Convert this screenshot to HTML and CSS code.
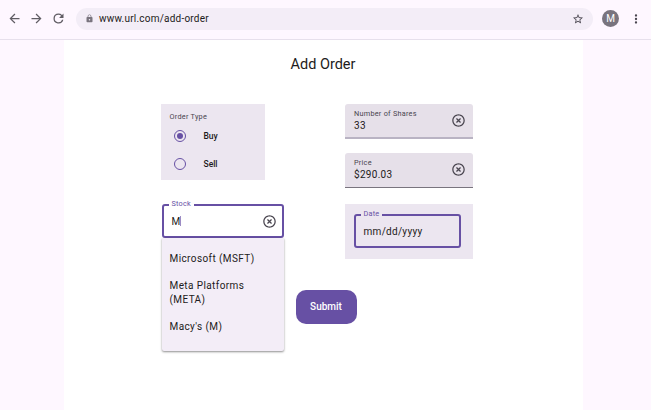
FILE: index.html
```html
<!DOCTYPE html>
<html lang="en">
<head>
<meta charset="utf-8">
<title>Add Order</title>
<link rel="stylesheet" href="styles.css">
</head>
<body>
<svg class="defs" aria-hidden="true">
  <symbol id="clear" viewBox="0 0 24 24"><path d="M14.59 8 12 10.59 9.41 8 8 9.41 10.59 12 8 14.59 9.41 16 12 13.41 14.59 16 16 14.59 13.41 12 16 9.41 14.59 8zM12 2C6.47 2 2 6.47 2 12s4.47 10 10 10 10-4.47 10-10S17.53 2 12 2zm0 18c-4.41 0-8-3.59-8-8s3.59-8 8-8 8 3.59 8 8-3.59 8-8 8z"/></symbol>
</svg>
<header class="browser">
  <svg class="nav" viewBox="0 0 24 24"><path d="M20 11H7.83l5.59-5.59L12 4l-8 8 8 8 1.41-1.41L7.83 13H20v-2z"/></svg>
  <svg class="nav" viewBox="0 0 24 24"><path d="m12 4-1.41 1.41L16.17 11H4v2h12.17l-5.58 5.59L12 20l8-8z"/></svg>
  <svg class="nav" viewBox="0 0 24 24"><path d="M17.65 6.35A7.95 7.95 0 0 0 12 4a8 8 0 1 0 7.73 10h-2.08A6 6 0 1 1 12 6c1.66 0 3.14.69 4.22 1.78L13 11h7V4l-2.35 2.35z"/></svg>
  <div class="address">
    <svg class="lock" viewBox="0 0 24 24"><path d="M18 8h-1V6A5 5 0 0 0 7 6v2H6a2 2 0 0 0-2 2v10c0 1.100.9 2 2 2h12a2 2 0 0 0 2-2V10a2 2 0 0 0-2-2zm-6 9a2 2 0 1 1 0-4 2 2 0 0 1 0 4zm3.100-9H8.900V6a3.100 3.100 0 0 1 6.200 0v2z"/></svg>
    <span class="url">www.url.com/add-order</span>
    <svg class="star" viewBox="0 0 24 24"><path d="m22 9.240-7.190-.62L12 2 9.190 8.630 2 9.240l5.460 4.730L5.820 21 12 17.270 18.180 21l-1.630-7.030L22 9.240zM12 15.400l-3.760 2.270 1-4.280-3.320-2.880 4.380-.38L12 6.100l1.710 4.040 4.380.38-3.320 2.880 1 4.280L12 15.400z"/></svg>
  </div>
  <div class="avatar">M</div>
  <svg class="more" viewBox="0 0 24 24"><path d="M12 8a2 2 0 1 0 0-4 2 2 0 0 0 0 4zm0 2a2 2 0 1 0 0 4 2 2 0 0 0 0-4zm0 6a2 2 0 1 0 0 4 2 2 0 0 0 0-4z"/></svg>
</header>
<main class="page">
  <h1 class="title">Add Order</h1>
  <form class="form">
    <div class="column">
      <div class="order-type">
        <div class="caption">Order Type</div>
        <div class="option"><span class="radio selected"></span>Buy</div>
        <div class="option"><span class="radio"></span>Sell</div>
      </div>
      <div class="outlined stock">
        <span class="label">Stock</span>
        <span class="value">M</span><span class="caret"></span>
        <svg class="clear"><use href="#clear"/></svg>
        <div class="menu">
          <div class="item">Microsoft (MSFT)</div>
          <div class="item">Meta Platforms (META)</div>
          <div class="item">Macy's (M)</div>
        </div>
      </div>
    </div>
    <div class="column">
      <div class="filled active">
        <div class="text"><div class="caption">Number of Shares</div><div class="value">33</div></div>
        <svg class="clear"><use href="#clear"/></svg>
      </div>
      <div class="filled">
        <div class="text"><div class="caption">Price</div><div class="value">$290.03</div></div>
        <svg class="clear"><use href="#clear"/></svg>
      </div>
      <div class="date-card">
        <div class="outlined date">
          <span class="label">Date</span>
          <span class="value">mm/dd/yyyy</span>
        </div>
      </div>
    </div>
  </form>
  <div class="submit">Submit</div>
</main>
</body>
</html>
```
FILE: styles.css
```css
* { box-sizing: border-box; }
body {
  margin: 0;
  height: 410px;
  overflow: hidden;
  background: #fef7ff;
  color: #1d1b20;
  font-family: Roboto, sans-serif;
}
svg { display: block; flex: none; fill: #49454f; }
.defs { position: absolute; width: 0; height: 0; }
.browser {
  display: flex;
  align-items: center;
  height: 40px;
  padding: 0 0 2px 7px;
  border-bottom: 1px solid #e7e0ec;
}
.nav { width: 15px; height: 15px; margin-right: 7px; fill: #605d64; }
.address {
  display: flex;
  align-items: center;
  width: 517px;
  height: 22px;
  margin-left: 3px;
  padding: 0 9px;
  border-radius: 11px;
  background: #f3edf7;
}
.lock { width: 9px; height: 9px; fill: #79747e; }
.url { flex: 1; margin-left: 5px; font-size: 10px; letter-spacing: .22px; }
.star { width: 12px; height: 12px; }
.avatar {
  width: 17px;
  height: 17px;
  margin-left: 9px;
  border-radius: 50%;
  background: #79747e;
  color: #fff;
  font-size: 10px;
  line-height: 17px;
  text-align: center;
}
.more { width: 14px; height: 14px; margin-left: 10px; }
.page { width: 519px; height: 370px; margin-left: 63.5px; background: #fff; }
.title {
  margin: 0;
  padding-top: 16px;
  font-size: 14.500px;
  font-weight: 400;
  line-height: 18px;
  text-align: center;
}
.form { display: flex; gap: 61px; padding: 30px 0 0 97px; }
.column { display: flex; flex-direction: column; width: 123px; }
.column + .column { width: 128px; }
.caption { color: #49454f; font-size: 7.300px; line-height: 10px; letter-spacing: .25px; }
.order-type { width: 104px; height: 76px; padding: 7.500px 9px; background: #ece6f0; }
.option {
  display: flex;
  align-items: center;
  height: 28.500px;
  padding-left: 4px;
  font-size: 8.500px;
  font-weight: 500;
}
.option .radio { margin-right: 18px; }
.radio {
  display: grid;
  place-items: center;
  width: 12px;
  height: 12px;
  border: 1.500px solid #6750a4;
  border-radius: 50%;
}
.radio.selected::after {
  content: "";
  width: 6px;
  height: 6px;
  border-radius: 50%;
  background: #6750a4;
}
.outlined {
  position: relative;
  display: flex;
  align-items: center;
  height: 34px;
  padding-left: 8px;
  border: 2px solid #6750a4;
  border-radius: 3px;
}
.label {
  position: absolute;
  top: -7px;
  left: 5px;
  padding: 0 3px;
  background: #fff;
  color: #6750a4;
  font-size: 7.300px;
  line-height: 10px;
  letter-spacing: .2px;
}
.value { font-size: 10px; line-height: 13px; letter-spacing: .3px; }
.stock { width: 122px; margin: 24px 0 0 1px; }
.caret { width: 1px; height: 10px; margin-left: -1px; background: #9c8cc4; }
.clear { width: 15px; height: 15px; margin-left: auto; }
.stock .clear { margin-right: 5px; }
.menu {
  position: absolute;
  top: 32px;
  left: -2px;
  width: 122px;
  height: 113px;
  padding-top: 7px;
  border-radius: 0 0 2px 2px;
  background: #f3edf7;
  box-shadow: 0 1px 2px rgba(0, 0, 0, .35), 0 1px 3px rgba(0, 0, 0, .12);
}
.item { padding: 6.500px 20px 6px 8px; font-size: 10px; line-height: 14.500px; letter-spacing: .4px; }
.filled {
  display: flex;
  height: 34.500px;
  margin-bottom: 14.500px;
  padding: 5px 7px 0 9.500px;
  border-bottom: 1px solid #79747e;
  border-radius: 3px 3px 0 0;
  background: #e6e0e9;
}
.filled.active { border-bottom: 2px solid #b9b3c3; }
.filled .clear { margin-top: 4px; }
.date-card { height: 55px; margin-top: 2px; padding: 10px 12px 0 9px; background: #ece6f0; }
.date .label { background: #ece6f0; }
.submit {
  width: 61px;
  height: 34px;
  margin: 31px 0 0 232px;
  border-radius: 10px;
  background: #6750a4;
  color: #fff;
  font-size: 10px;
  font-weight: 500;
  line-height: 34px;
  text-align: center;
}
```
